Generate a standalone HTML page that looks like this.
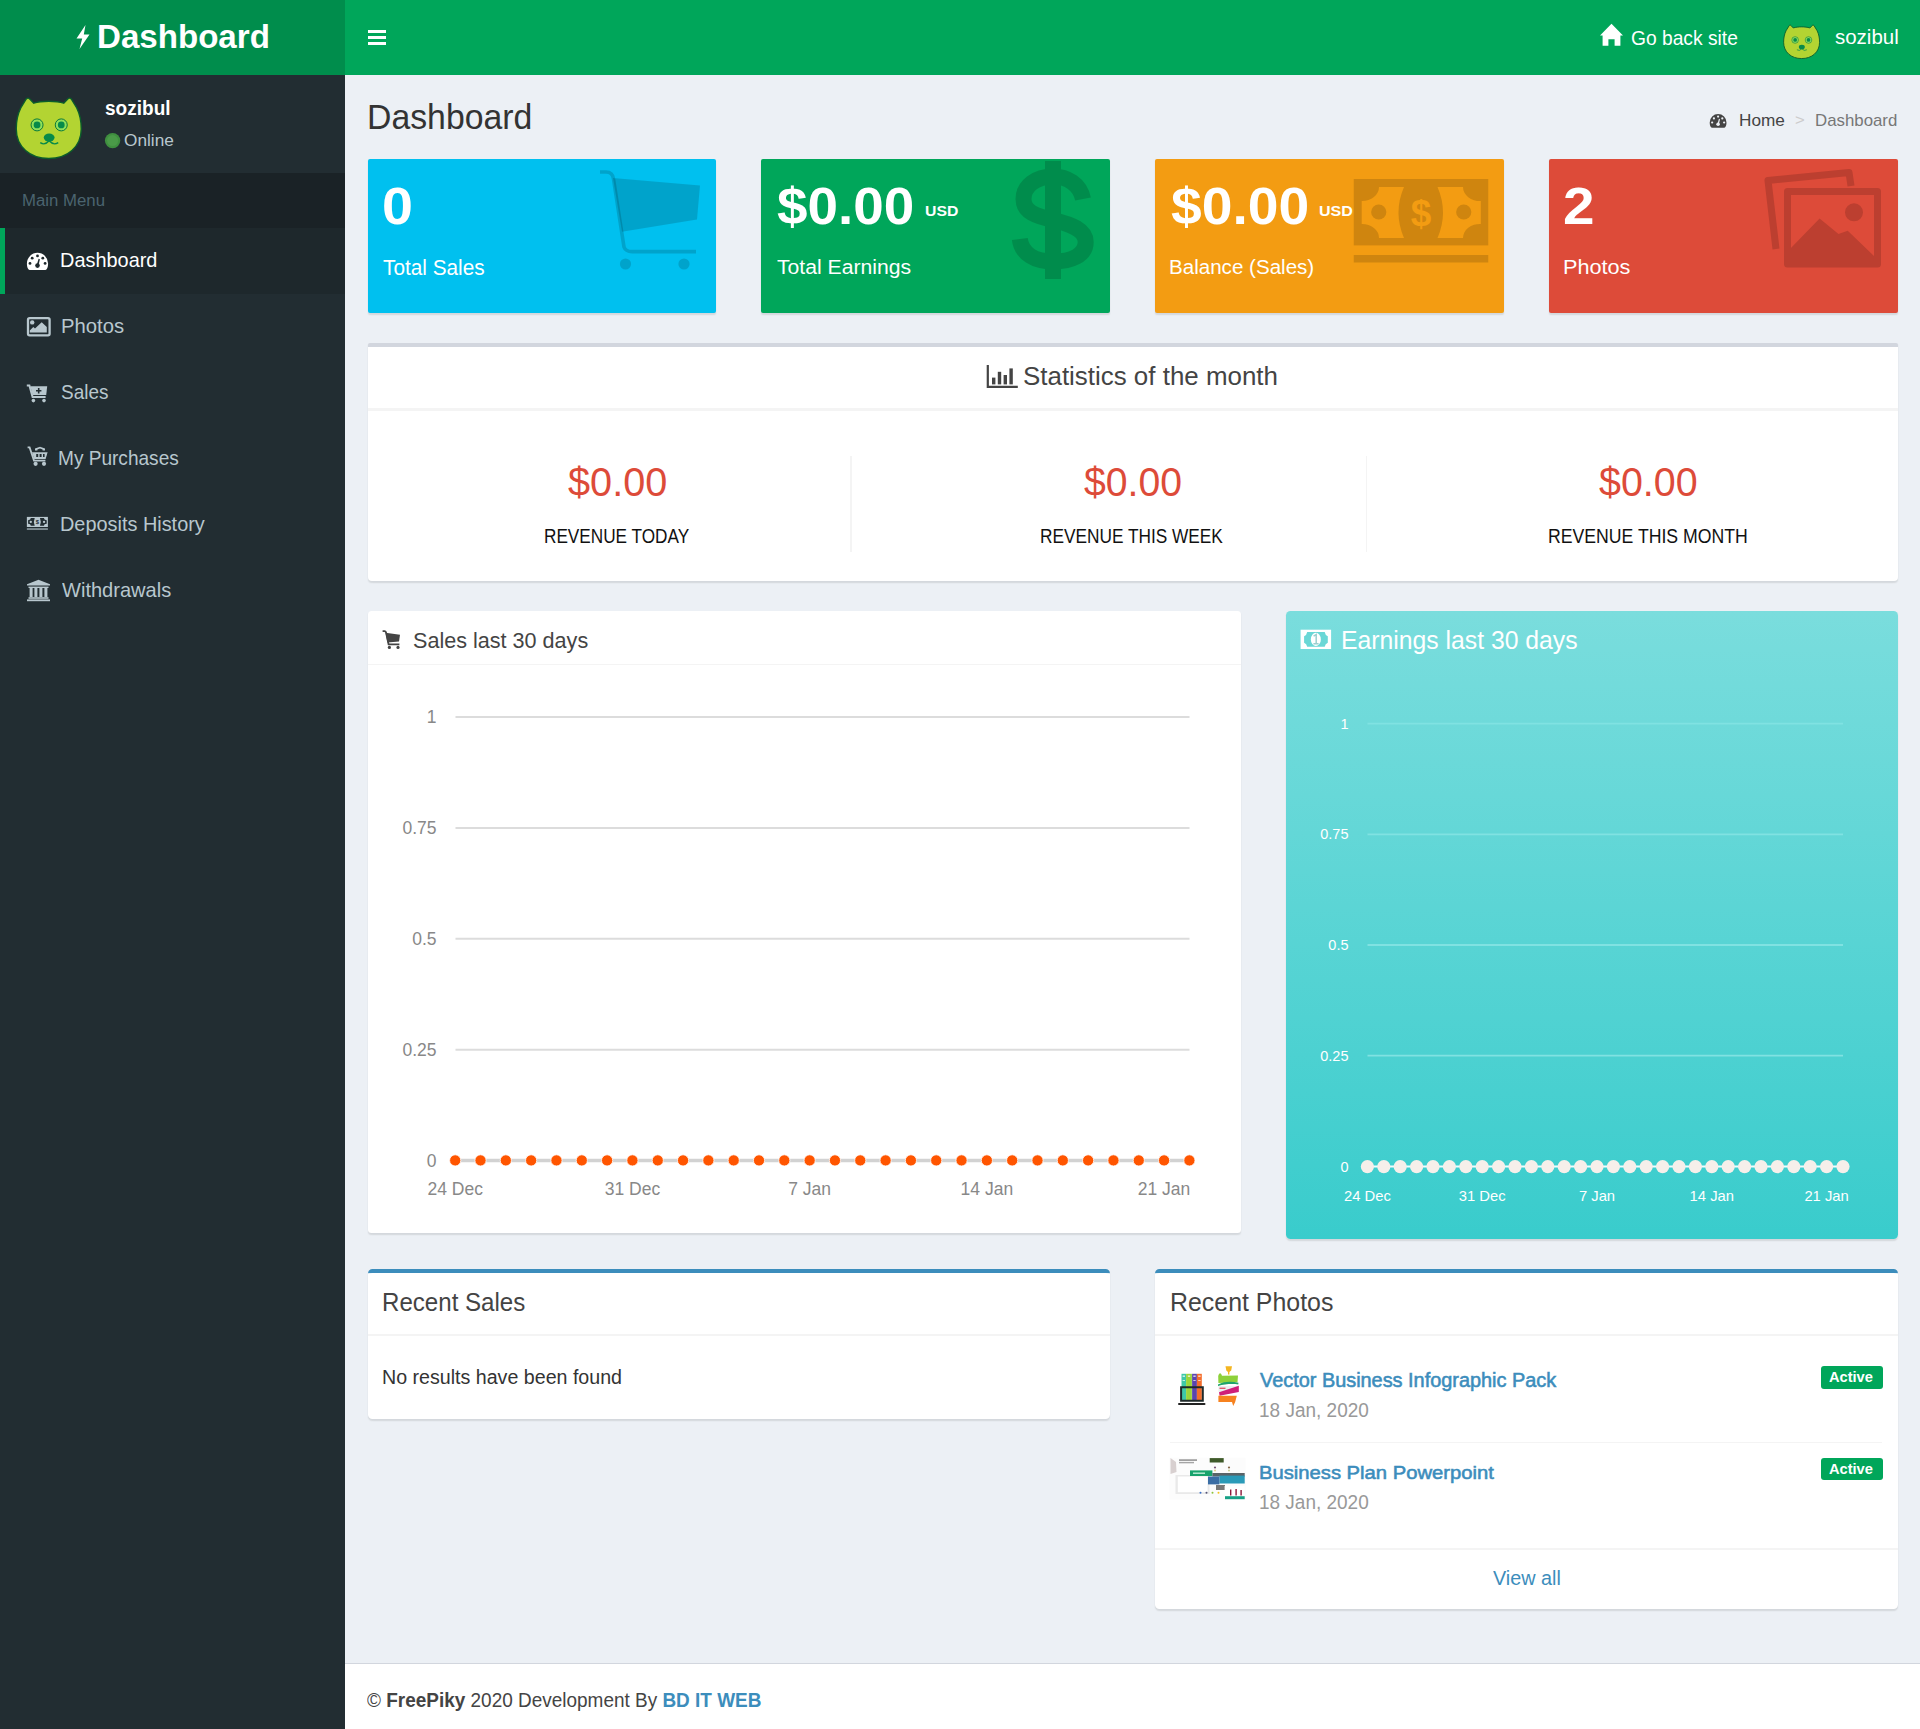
<!DOCTYPE html>
<html><head><meta charset="utf-8"><title>Dashboard</title>
<style>
html,body{margin:0;padding:0;width:1920px;height:1729px;overflow:hidden;background:#ecf0f5;}
body{position:relative;font-family:"Liberation Sans",sans-serif;}
.r{position:absolute;}
.t{position:absolute;line-height:1;white-space:nowrap;}
svg{display:block;overflow:visible;}
</style></head><body>
<div class="r" style="left:0px;top:0px;width:1920px;height:1729px;background:#ecf0f5;"></div>
<div class="r" style="left:0px;top:75px;width:345px;height:1654px;background:#222d32;"></div>
<div class="r" style="left:0px;top:0px;width:345px;height:75px;background:#008d4c;"></div>
<div class="r" style="left:345px;top:0px;width:1575px;height:75px;background:#00a65a;"></div>
<svg class="r" style="left:74px;top:24px" width="18" height="26" viewBox="0 0 18 26"><path d="M11.5 1 L2.5 14.5 H8.2 L5.5 25 L15.5 10.5 H9.8 Z" fill="#fff"/></svg>
<div class="t" style="left:97.35px;top:19.78px;font-size:33.33px;color:#fff;font-weight:700;transform:scaleX(0.9931);transform-origin:0 0;">Dashboard</div>
<div class="r" style="left:367.5px;top:30px;width:18.5px;height:3px;background:#fff;"></div>
<div class="r" style="left:367.5px;top:36px;width:18.5px;height:3px;background:#fff;"></div>
<div class="r" style="left:367.5px;top:42px;width:18.5px;height:3px;background:#fff;"></div>
<svg class="r" style="left:1599px;top:23px" width="25" height="24" viewBox="0 0 25 24"><path d="M12.5 0.8 L24 12.4 H21.4 V22.8 H15.6 V16.2 H9.4 V22.8 H3.6 V12.4 H1 Z" fill="#fff"/></svg>
<div class="t" style="left:1631.04px;top:27.55px;font-size:20.14px;color:#fff;font-weight:400;transform:scaleX(0.9550);transform-origin:0 0;">Go back site</div>
<svg class="r" style="left:1782.5px;top:23.5px" width="37.2" height="35.4" viewBox="-1 -1 67 64">
<path d="M32.5 61.5 C14 61.5 0 50 0 32 C0 24 1.5 17 4.5 11 L10 2 C11 0.8 12.5 0.8 13.5 2 L17.5 6.2 C22 4.6 27 4.2 32.5 4.2 C38 4.2 43 4.6 47.5 6.2 L51.5 2 C52.5 0.8 54 0.8 55 2 L60.5 11 C63.5 17 65 24 65 32 C65 50 51 61.5 32.5 61.5 Z" fill="#b3d432" stroke="#0b5d2b" stroke-width="1.6"/>
<circle cx="20.8" cy="27.9" r="6" fill="#8fe05a" stroke="#0b7a3a" stroke-width="1"/><circle cx="20.8" cy="27.9" r="3.4" fill="#078a49"/>
<circle cx="45" cy="27.9" r="6" fill="#8fe05a" stroke="#0b7a3a" stroke-width="1"/><circle cx="45" cy="27.9" r="3.4" fill="#078a49"/>
<ellipse cx="32.9" cy="40.6" rx="5.4" ry="4.2" fill="#078a49"/>
<path d="M24 45.6 Q28.5 48.8 32.9 43.8 Q37.3 48.8 42 45.6" fill="none" stroke="#078a49" stroke-width="1.3"/>
</svg>
<div class="t" style="left:1834.99px;top:27.40px;font-size:20.55px;color:#fff;font-weight:400;transform:scaleX(0.9957);transform-origin:0 0;">sozibul</div>
<svg class="r" style="left:15px;top:96px" width="67.5" height="64" viewBox="-1 -1 67 64">
<path d="M32.5 61.5 C14 61.5 0 50 0 32 C0 24 1.5 17 4.5 11 L10 2 C11 0.8 12.5 0.8 13.5 2 L17.5 6.2 C22 4.6 27 4.2 32.5 4.2 C38 4.2 43 4.6 47.5 6.2 L51.5 2 C52.5 0.8 54 0.8 55 2 L60.5 11 C63.5 17 65 24 65 32 C65 50 51 61.5 32.5 61.5 Z" fill="#b3d432" stroke="#0b5d2b" stroke-width="1.4"/>
<circle cx="20.8" cy="27.9" r="6" fill="#8fe05a" stroke="#0b7a3a" stroke-width="1"/><circle cx="20.8" cy="27.9" r="3.4" fill="#078a49"/>
<circle cx="45" cy="27.9" r="6" fill="#8fe05a" stroke="#0b7a3a" stroke-width="1"/><circle cx="45" cy="27.9" r="3.4" fill="#078a49"/>
<ellipse cx="32.9" cy="40.6" rx="5.4" ry="4.2" fill="#078a49"/>
<path d="M24 45.6 Q28.5 48.8 32.9 43.8 Q37.3 48.8 42 45.6" fill="none" stroke="#078a49" stroke-width="1.3"/>
</svg>
<div class="t" style="left:104.73px;top:98.29px;font-size:20.69px;color:#fff;font-weight:700;transform:scaleX(0.9204);transform-origin:0 0;">sozibul</div>
<svg class="r" style="left:104px;top:132px" width="17" height="17" viewBox="0 0 17 17"><circle cx="8.6" cy="8.6" r="7.7" fill="#3f8f3f"/><circle cx="8.6" cy="8.6" r="5.5" fill="#4a9a48"/></svg>
<div class="t" style="left:123.82px;top:132.55px;font-size:16.71px;color:#b8c7ce;font-weight:400;transform:scaleX(1.0321);transform-origin:0 0;">Online</div>
<div class="r" style="left:0px;top:172.5px;width:345px;height:55.5px;background:#1a2226;"></div>
<div class="t" style="left:22.16px;top:192.30px;font-size:17.25px;color:#4b646f;font-weight:400;transform:scaleX(0.9724);transform-origin:0 0;">Main Menu</div>
<div class="r" style="left:0px;top:228px;width:345px;height:66px;background:#1e282c;"></div>
<div class="r" style="left:0px;top:228px;width:4.5px;height:66px;background:#00a65a;"></div>
<div class="t" style="left:60.41px;top:250.63px;font-size:19.93px;color:#fff;font-weight:400;transform:scaleX(0.9994);transform-origin:0 0;">Dashboard</div>
<div class="t" style="left:60.88px;top:316.88px;font-size:19.93px;color:#b8c7ce;font-weight:400;transform:scaleX(1.0170);transform-origin:0 0;">Photos</div>
<div class="t" style="left:61.15px;top:382.43px;font-size:20.29px;color:#b8c7ce;font-weight:400;transform:scaleX(0.9350);transform-origin:0 0;">Sales</div>
<div class="t" style="left:57.87px;top:448.73px;font-size:19.93px;color:#b8c7ce;font-weight:400;transform:scaleX(0.9568);transform-origin:0 0;">My Purchases</div>
<div class="t" style="left:60.41px;top:514.73px;font-size:19.93px;color:#b8c7ce;font-weight:400;transform:scaleX(0.9981);transform-origin:0 0;">Deposits History</div>
<div class="t" style="left:61.90px;top:580.73px;font-size:19.93px;color:#b8c7ce;font-weight:400;transform:scaleX(1.0064);transform-origin:0 0;">Withdrawals</div>
<svg class="r" style="left:26px;top:252px" width="24" height="19" viewBox="0 0 24 19">
<path d="M11.5 0.8 A10.6 10.6 0 0 1 22.1 11.4 C22.1 14 21.5 16 20.6 17.2 C20.3 17.7 19.8 18 19.2 18 H3.8 C3.2 18 2.7 17.7 2.4 17.2 C1.5 16 0.9 14 0.9 11.4 A10.6 10.6 0 0 1 11.5 0.8 Z" fill="#fff"/>
<g fill="#1e282c"><circle cx="11.5" cy="3.9" r="1.4"/><circle cx="6.2" cy="6.2" r="1.4"/><circle cx="16.8" cy="6.2" r="1.4"/><circle cx="4" cy="11.4" r="1.4"/><circle cx="19.1" cy="11.4" r="1.4"/>
<circle cx="11.5" cy="13.6" r="2.3"/><path d="M10.6 13.4 L12.6 6.8 L13.9 7.2 L12.4 13.8 Z"/></g></svg>
<svg class="r" style="left:26px;top:316px" width="25" height="21" viewBox="0 0 25 21">
<rect x="2" y="2.2" width="21.6" height="17.2" rx="1.6" fill="none" stroke="#b8c7ce" stroke-width="2.3"/>
<circle cx="6.2" cy="6.4" r="2.2" fill="#b8c7ce"/>
<path d="M3.8 16.6 L3.8 14.6 L7.3 11 L9 12.6 L15.7 6.2 L20.8 11 L20.8 16.6 Z" fill="#b8c7ce"/></svg>
<svg class="r" style="left:26px;top:384px" width="22" height="19" viewBox="0 0 22 19">
<path d="M0.8 1.4 H3.4 L6.6 13 H19.6" fill="none" stroke="#b8c7ce" stroke-width="2"/>
<path d="M4.4 2.2 H21.2 L20.2 11 H6.6 Z" fill="#b8c7ce"/>
<path d="M12.7 4 V9.4 M10 6.7 H15.4" stroke="#222d32" stroke-width="1.6"/>
<circle cx="7.4" cy="16.6" r="1.8" fill="#b8c7ce"/><circle cx="18" cy="16.6" r="1.8" fill="#b8c7ce"/></svg>
<svg class="r" style="left:27px;top:446px" width="22" height="21" viewBox="0 0 22 21">
<path d="M0.6 1.4 H2.6 L7 14.6 H18.4" fill="none" stroke="#b8c7ce" stroke-width="1.8"/>
<path d="M5 6.2 H20.6 L18.6 13 H7.2 Z" fill="#b8c7ce"/>
<path d="M8 2.6 L13 0.8 L18 2.6 V4.6 H15.6 V3.4 L13 2.5 L10.4 3.4 V4.6 H8 Z" fill="#b8c7ce"/>
<g fill="#222d32"><rect x="9.2" y="8" width="2" height="3"/><rect x="12.6" y="8" width="2" height="3"/><rect x="16" y="8" width="1.6" height="3"/></g>
<circle cx="8.6" cy="17.8" r="2.1" fill="#b8c7ce"/><circle cx="17" cy="17.8" r="2.1" fill="#b8c7ce"/></svg>
<svg class="r" style="left:0;top:0" width="60" height="560" viewBox="0 0 60 560"><g transform="translate(26.86 516.9) scale(0.15637 0.1521) translate(-1353.75 -179)">
<rect x="1353.75" y="179" width="134.5" height="66.4" fill="#b8c7ce"/>
<path d="M1379 187 H1404 Q1393 212.5 1404 238 H1379 A17 14 0 0 0 1361.7 224 V201 A17 14 0 0 0 1379 187 Z" fill="#222d32"/>
<path d="M1463 187 H1437.5 Q1448.5 212.5 1437.5 238 H1463 A17 14 0 0 1 1480.8 224 V201 A17 14 0 0 1 1463 187 Z" fill="#222d32"/>
<circle cx="1378.75" cy="212" r="7.6" fill="#b8c7ce"/><circle cx="1463.75" cy="212" r="7.6" fill="#b8c7ce"/>
<rect x="1353.75" y="255" width="134.5" height="7.5" fill="#b8c7ce"/><text x="1421" y="226" font-size="37" font-weight="700" text-anchor="middle" fill="#222d32" font-family="Liberation Sans">$</text></g></svg>
<svg class="r" style="left:26px;top:579px" width="25" height="23" viewBox="0 0 25 23">
<path d="M12.5 0.8 L24 5.2 V6.6 H1 V5.2 Z" fill="#b8c7ce"/>
<rect x="2.5" y="7.6" width="20" height="1.4" fill="#b8c7ce"/>
<rect x="3.6" y="9" width="3" height="9" fill="#b8c7ce"/><rect x="8.4" y="9" width="3" height="9" fill="#b8c7ce"/>
<rect x="13.4" y="9" width="3" height="9" fill="#b8c7ce"/><rect x="18.4" y="9" width="3" height="9" fill="#b8c7ce"/>
<rect x="2.5" y="18.2" width="20" height="1.6" fill="#b8c7ce"/><rect x="1" y="20.4" width="23" height="1.8" fill="#b8c7ce"/></svg>
<div class="t" style="left:367.20px;top:100.16px;font-size:34.78px;color:#333;font-weight:400;transform:scaleX(0.9719);transform-origin:0 0;">Dashboard</div>
<svg class="r" style="left:1709px;top:113px" width="19" height="16" viewBox="0 0 24 19">
<path d="M11.5 0.8 A10.6 10.6 0 0 1 22.1 11.4 C22.1 14 21.5 16 20.6 17.2 C20.3 17.7 19.8 18 19.2 18 H3.8 C3.2 18 2.7 17.7 2.4 17.2 C1.5 16 0.9 14 0.9 11.4 A10.6 10.6 0 0 1 11.5 0.8 Z" fill="#444"/>
<g fill="#ecf0f5"><circle cx="11.5" cy="3.9" r="1.4"/><circle cx="6.2" cy="6.2" r="1.4"/><circle cx="16.8" cy="6.2" r="1.4"/><circle cx="4" cy="11.4" r="1.4"/><circle cx="19.1" cy="11.4" r="1.4"/>
<circle cx="11.5" cy="13.6" r="2.3"/><path d="M10.6 13.4 L12.6 6.8 L13.9 7.2 L12.4 13.8 Z"/></g></svg>
<div class="t" style="left:1738.62px;top:112.08px;font-size:17.39px;color:#444;font-weight:400;transform:scaleX(0.9893);transform-origin:0 0;">Home</div>
<div class="t" style="left:1794.5px;top:113.33px;font-size:14.5px;color:#ccc;font-weight:400;transform:scaleX(1.15);transform-origin:0 0;">&gt;</div>
<div class="t" style="left:1815.15px;top:112.08px;font-size:17.39px;color:#777;font-weight:400;transform:scaleX(0.9682);transform-origin:0 0;">Dashboard</div>
<div class="r" style="left:368px;top:159px;width:348px;height:153.5px;background:#00c0ef;border-radius:2px;box-shadow:0 1.5px 1.5px rgba(0,0,0,0.1);"></div>
<div class="r" style="left:761px;top:159px;width:349px;height:153.5px;background:#00a65a;border-radius:2px;box-shadow:0 1.5px 1.5px rgba(0,0,0,0.1);"></div>
<div class="r" style="left:1155px;top:159px;width:349px;height:153.5px;background:#f39c12;border-radius:2px;box-shadow:0 1.5px 1.5px rgba(0,0,0,0.1);"></div>
<div class="r" style="left:1549px;top:159px;width:349px;height:153.5px;background:#dd4b39;border-radius:2px;box-shadow:0 1.5px 1.5px rgba(0,0,0,0.1);"></div>
<svg class="r" style="left:580px;top:159px" width="136" height="131" viewBox="580 159 136 131">
<path d="M600 172 H606 C611 172 613 175 613.5 179 L624 247 C625 250 627 251.6 632 251.6 H696" fill="none" stroke="rgba(0,0,0,0.15)" stroke-width="3.6"/>
<path d="M613 178 L700 185.5 L697 219.6 L622 231.7 Z" fill="rgba(0,0,0,0.15)"/>
<circle cx="625.5" cy="264" r="5.6" fill="rgba(0,0,0,0.15)"/><circle cx="684" cy="264" r="5.6" fill="rgba(0,0,0,0.15)"/></svg>
<svg class="r" style="left:990px;top:159px" width="120" height="131" viewBox="990 159 120 131">
<g opacity="0.15"><path d="M1083 199 C1080 184 1067 176.5 1053 176.5 C1036 176.5 1023.5 186 1023.5 199 C1023.5 212 1036 216 1053 220 C1072 224.5 1085.7 230 1085.7 242 C1085.7 255 1072 261.5 1053 261.5 C1035 261.5 1021.5 254 1019.8 239" fill="none" stroke="#000" stroke-width="16"/>
<rect x="1045" y="161" width="16" height="118" fill="#000"/></g></svg>
<svg class="r" style="left:1340px;top:170px" width="160" height="100" viewBox="1340 170 160 100"><g transform="">
<rect x="1353.75" y="179" width="134.5" height="66.4" fill="#cf850f"/>
<path d="M1379 187 H1404 Q1393 212.5 1404 238 H1379 A17 14 0 0 0 1361.7 224 V201 A17 14 0 0 0 1379 187 Z" fill="#f39c12"/>
<path d="M1463 187 H1437.5 Q1448.5 212.5 1437.5 238 H1463 A17 14 0 0 1 1480.8 224 V201 A17 14 0 0 1 1463 187 Z" fill="#f39c12"/>
<circle cx="1378.75" cy="212" r="7.6" fill="#cf850f"/><circle cx="1463.75" cy="212" r="7.6" fill="#cf850f"/>
<rect x="1353.75" y="255" width="134.5" height="7.5" fill="#cf850f"/><text x="1421" y="226" font-size="37" font-weight="700" text-anchor="middle" fill="#f39c12" font-family="Liberation Sans">$</text></g></svg>
<svg class="r" style="left:1750px;top:160px" width="148" height="120" viewBox="1750 160 148 120">
<path d="M1776 249 L1768 180.5 L1849 172.5 L1851 186" fill="none" stroke="#bc3f30" stroke-width="7" stroke-linejoin="round"/>
<rect x="1787.5" y="191.5" width="90" height="72.5" fill="none" stroke="#bc3f30" stroke-width="7" stroke-linejoin="round"/>
<circle cx="1854" cy="212.3" r="9" fill="#bc3f30"/>
<path d="M1790 249 L1819.6 218.5 L1838.5 234 L1847.7 230.8 L1874 256 V262 H1790 Z" fill="#bc3f30"/></svg>
<div class="t" style="left:381.98px;top:180.18px;font-size:52.71px;color:#fff;font-weight:700;transform:scaleX(1.0543);transform-origin:0 0;">0</div>
<div class="t" style="left:382.78px;top:256.62px;font-size:21.59px;color:#fff;font-weight:400;transform:scaleX(0.9626);transform-origin:0 0;">Total Sales</div>
<div class="t" style="left:777.18px;top:180.30px;font-size:52.57px;color:#fff;font-weight:700;transform:scaleX(1.0425);transform-origin:0 0;">$0.00</div>
<div class="t" style="left:925.45px;top:202.62px;font-size:15.22px;color:#fff;font-weight:700;transform:scaleX(1.0364);transform-origin:0 0;">USD</div>
<div class="t" style="left:776.58px;top:257.06px;font-size:20.72px;color:#fff;font-weight:400;transform:scaleX(1.0219);transform-origin:0 0;">Total Earnings</div>
<div class="t" style="left:1170.87px;top:180.30px;font-size:52.57px;color:#fff;font-weight:700;transform:scaleX(1.0503);transform-origin:0 0;">$0.00</div>
<div class="t" style="left:1319.04px;top:202.62px;font-size:15.22px;color:#fff;font-weight:700;transform:scaleX(1.0527);transform-origin:0 0;">USD</div>
<div class="t" style="left:1168.85px;top:257.06px;font-size:20.72px;color:#fff;font-weight:400;transform:scaleX(0.9929);transform-origin:0 0;">Balance (Sales)</div>
<div class="t" style="left:1562.82px;top:180.18px;font-size:52.71px;color:#fff;font-weight:700;transform:scaleX(1.0750);transform-origin:0 0;">2</div>
<div class="t" style="left:1563.07px;top:257.06px;font-size:20.72px;color:#fff;font-weight:400;transform:scaleX(1.0455);transform-origin:0 0;">Photos</div>
<div class="r" style="left:368px;top:343px;width:1530px;height:238px;background:#fff;border-top:4.5px solid #d2d6de;border-radius:2px 2px 4px 4px;box-shadow:0 1.5px 1.5px rgba(0,0,0,0.1);box-sizing:border-box;"></div>
<div class="r" style="left:368px;top:408px;width:1530px;height:3px;background:#f4f4f4;"></div>
<svg class="r" style="left:986px;top:364px" width="33" height="25" viewBox="0 0 33 25">
<path d="M1.8 1 V22.8 H31.8" fill="none" stroke="#444" stroke-width="2.2"/>
<rect x="6" y="13.6" width="3.4" height="6.8" fill="#444"/><rect x="11.8" y="7.8" width="3.4" height="12.6" fill="#444"/>
<rect x="17.6" y="11" width="3.4" height="9.4" fill="#444"/><rect x="23.4" y="4.4" width="3.4" height="16" fill="#444"/></svg>
<div class="t" style="left:1023.43px;top:363.73px;font-size:25.71px;color:#444;font-weight:400;transform:scaleX(1.0081);transform-origin:0 0;">Statistics of the month</div>
<div class="t" style="left:568.20px;top:462.01px;font-size:40.86px;color:#dd4b39;font-weight:400;transform:scaleX(0.9710);transform-origin:0 0;">$0.00</div>
<div class="t" style="left:544.23px;top:526.07px;font-size:20.00px;color:#111;font-weight:400;transform:scaleX(0.8592);transform-origin:0 0;">REVENUE TODAY</div>
<div class="t" style="left:1083.81px;top:462.01px;font-size:40.86px;color:#dd4b39;font-weight:400;transform:scaleX(0.9591);transform-origin:0 0;">$0.00</div>
<div class="t" style="left:1040.42px;top:526.07px;font-size:20.00px;color:#111;font-weight:400;transform:scaleX(0.8629);transform-origin:0 0;">REVENUE THIS WEEK</div>
<div class="t" style="left:1599.21px;top:462.01px;font-size:40.86px;color:#dd4b39;font-weight:400;transform:scaleX(0.9651);transform-origin:0 0;">$0.00</div>
<div class="t" style="left:1547.99px;top:526.07px;font-size:20.00px;color:#111;font-weight:400;transform:scaleX(0.8826);transform-origin:0 0;">REVENUE THIS MONTH</div>
<div class="r" style="left:850px;top:456px;width:1.5px;height:96px;background:#f4f4f4;"></div>
<div class="r" style="left:1365.5px;top:456px;width:1.5px;height:96px;background:#f4f4f4;"></div>
<div class="r" style="left:368px;top:611px;width:873px;height:622px;background:#fff;border-radius:3.5px;box-shadow:0 1.5px 1.5px rgba(0,0,0,0.1);"></div>
<div class="r" style="left:368px;top:663.5px;width:873px;height:1.5px;background:#f4f4f4;"></div>
<svg class="r" style="left:382px;top:630px" width="19" height="20" viewBox="0 0 19 20">
<path d="M0.6 1.2 H2.6 C3.4 1.2 3.8 1.8 4 2.4 L6.6 14.4 H17.4" fill="none" stroke="#444" stroke-width="1.8"/>
<path d="M3.6 2.8 L18 4.8 L17 11.6 L5.4 12.4 Z" fill="#444"/>
<circle cx="7.4" cy="17.4" r="1.6" fill="#444"/><circle cx="16" cy="17.4" r="1.6" fill="#444"/></svg>
<div class="t" style="left:412.93px;top:630.04px;font-size:21.57px;color:#444;font-weight:400;transform:scaleX(1.0010);transform-origin:0 0;">Sales last 30 days</div>
<svg class="r" style="left:368px;top:665px" width="873" height="568" viewBox="368 665 873 568"><line x1="455.5" y1="717.1" x2="1189.5" y2="717.1" stroke="#dcdcdc" stroke-width="2"/><line x1="455.5" y1="828" x2="1189.5" y2="828" stroke="#dcdcdc" stroke-width="2"/><line x1="455.5" y1="938.8" x2="1189.5" y2="938.8" stroke="#dcdcdc" stroke-width="2"/><line x1="455.5" y1="1049.7" x2="1189.5" y2="1049.7" stroke="#dcdcdc" stroke-width="2"/><text x="436.5" y="723.1" font-size="17.5" text-anchor="end" fill="#888" font-family="Liberation Sans">1</text><text x="436.5" y="834.0" font-size="17.5" text-anchor="end" fill="#888" font-family="Liberation Sans">0.75</text><text x="436.5" y="944.8" font-size="17.5" text-anchor="end" fill="#888" font-family="Liberation Sans">0.5</text><text x="436.5" y="1055.7" font-size="17.5" text-anchor="end" fill="#888" font-family="Liberation Sans">0.25</text><text x="436.5" y="1166.5" font-size="17.5" text-anchor="end" fill="#888" font-family="Liberation Sans">0</text><line x1="455.5" y1="1160.5" x2="1189.5" y2="1160.5" stroke="#d2d2d2" stroke-width="3.5"/><circle cx="455.20" cy="1160.4" r="5.6" fill="#ff5500" stroke="#fff" stroke-width="0.8"/><circle cx="480.52" cy="1160.4" r="5.6" fill="#ff5500" stroke="#fff" stroke-width="0.8"/><circle cx="505.83" cy="1160.4" r="5.6" fill="#ff5500" stroke="#fff" stroke-width="0.8"/><circle cx="531.15" cy="1160.4" r="5.6" fill="#ff5500" stroke="#fff" stroke-width="0.8"/><circle cx="556.47" cy="1160.4" r="5.6" fill="#ff5500" stroke="#fff" stroke-width="0.8"/><circle cx="581.79" cy="1160.4" r="5.6" fill="#ff5500" stroke="#fff" stroke-width="0.8"/><circle cx="607.10" cy="1160.4" r="5.6" fill="#ff5500" stroke="#fff" stroke-width="0.8"/><circle cx="632.42" cy="1160.4" r="5.6" fill="#ff5500" stroke="#fff" stroke-width="0.8"/><circle cx="657.74" cy="1160.4" r="5.6" fill="#ff5500" stroke="#fff" stroke-width="0.8"/><circle cx="683.06" cy="1160.4" r="5.6" fill="#ff5500" stroke="#fff" stroke-width="0.8"/><circle cx="708.37" cy="1160.4" r="5.6" fill="#ff5500" stroke="#fff" stroke-width="0.8"/><circle cx="733.69" cy="1160.4" r="5.6" fill="#ff5500" stroke="#fff" stroke-width="0.8"/><circle cx="759.01" cy="1160.4" r="5.6" fill="#ff5500" stroke="#fff" stroke-width="0.8"/><circle cx="784.32" cy="1160.4" r="5.6" fill="#ff5500" stroke="#fff" stroke-width="0.8"/><circle cx="809.64" cy="1160.4" r="5.6" fill="#ff5500" stroke="#fff" stroke-width="0.8"/><circle cx="834.96" cy="1160.4" r="5.6" fill="#ff5500" stroke="#fff" stroke-width="0.8"/><circle cx="860.28" cy="1160.4" r="5.6" fill="#ff5500" stroke="#fff" stroke-width="0.8"/><circle cx="885.59" cy="1160.4" r="5.6" fill="#ff5500" stroke="#fff" stroke-width="0.8"/><circle cx="910.91" cy="1160.4" r="5.6" fill="#ff5500" stroke="#fff" stroke-width="0.8"/><circle cx="936.23" cy="1160.4" r="5.6" fill="#ff5500" stroke="#fff" stroke-width="0.8"/><circle cx="961.54" cy="1160.4" r="5.6" fill="#ff5500" stroke="#fff" stroke-width="0.8"/><circle cx="986.86" cy="1160.4" r="5.6" fill="#ff5500" stroke="#fff" stroke-width="0.8"/><circle cx="1012.18" cy="1160.4" r="5.6" fill="#ff5500" stroke="#fff" stroke-width="0.8"/><circle cx="1037.50" cy="1160.4" r="5.6" fill="#ff5500" stroke="#fff" stroke-width="0.8"/><circle cx="1062.81" cy="1160.4" r="5.6" fill="#ff5500" stroke="#fff" stroke-width="0.8"/><circle cx="1088.13" cy="1160.4" r="5.6" fill="#ff5500" stroke="#fff" stroke-width="0.8"/><circle cx="1113.45" cy="1160.4" r="5.6" fill="#ff5500" stroke="#fff" stroke-width="0.8"/><circle cx="1138.77" cy="1160.4" r="5.6" fill="#ff5500" stroke="#fff" stroke-width="0.8"/><circle cx="1164.08" cy="1160.4" r="5.6" fill="#ff5500" stroke="#fff" stroke-width="0.8"/><circle cx="1189.40" cy="1160.4" r="5.6" fill="#ff5500" stroke="#fff" stroke-width="0.8"/><text x="455.20" y="1194.8" font-size="17.5" text-anchor="middle" fill="#888" font-family="Liberation Sans">24 Dec</text><text x="632.42" y="1194.8" font-size="17.5" text-anchor="middle" fill="#888" font-family="Liberation Sans">31 Dec</text><text x="809.64" y="1194.8" font-size="17.5" text-anchor="middle" fill="#888" font-family="Liberation Sans">7 Jan</text><text x="986.86" y="1194.8" font-size="17.5" text-anchor="middle" fill="#888" font-family="Liberation Sans">14 Jan</text><text x="1164.08" y="1194.8" font-size="17.5" text-anchor="middle" fill="#888" font-family="Liberation Sans">21 Jan</text></svg>
<div class="r" style="left:1286px;top:611px;width:612px;height:627.5px;background:linear-gradient(to top, #39cccc, #7adddd);border-radius:4.5px;box-shadow:0 1.5px 1.5px rgba(0,0,0,0.1);"></div>
<svg class="r" style="left:1290px;top:620px" width="50" height="40" viewBox="1290 620 50 40">
<rect x="1300.6" y="629.7" width="30.5" height="19.3" fill="#fff"/>
<path d="M1307.2 632.1 H1324.7 Q1325.2 635.4 1327.8 636.2 V642.7 Q1325.2 643.5 1324.7 646.8 H1307.2 Q1306.7 643.5 1304.1 642.7 V636.2 Q1306.7 635.4 1307.2 632.1 Z" fill="#6ad7d6"/>
<ellipse cx="1315.85" cy="639.4" rx="5" ry="6.6" fill="#fff"/>
<path d="M1313.6 636.2 L1316.2 634.6 V643.6 M1313.4 643.8 H1318.6" fill="none" stroke="#9ccfcf" stroke-width="1.5"/></svg>
<div class="t" style="left:1341.22px;top:626.92px;font-size:26.09px;color:#fff;font-weight:400;transform:scaleX(0.9489);transform-origin:0 0;">Earnings last 30 days</div>
<svg class="r" style="left:1286px;top:660px" width="612" height="578" viewBox="1286 660 612 578"><line x1="1367.5" y1="723.6" x2="1843" y2="723.6" stroke="#80e2e2" stroke-width="1.8"/><line x1="1367.5" y1="834.3" x2="1843" y2="834.3" stroke="#80e2e2" stroke-width="1.8"/><line x1="1367.5" y1="945" x2="1843" y2="945" stroke="#80e2e2" stroke-width="1.8"/><line x1="1367.5" y1="1055.7" x2="1843" y2="1055.7" stroke="#80e2e2" stroke-width="1.8"/><text x="1348.5" y="728.6" font-size="14.5" text-anchor="end" fill="#fff" font-family="Liberation Sans">1</text><text x="1348.5" y="839.3" font-size="14.5" text-anchor="end" fill="#fff" font-family="Liberation Sans">0.75</text><text x="1348.5" y="950.0" font-size="14.5" text-anchor="end" fill="#fff" font-family="Liberation Sans">0.5</text><text x="1348.5" y="1060.7" font-size="14.5" text-anchor="end" fill="#fff" font-family="Liberation Sans">0.25</text><text x="1348.5" y="1171.6" font-size="14.5" text-anchor="end" fill="#fff" font-family="Liberation Sans">0</text><line x1="1367.5" y1="1166.6" x2="1843" y2="1166.6" stroke="#eff" stroke-width="2"/><circle cx="1367.40" cy="1166.6" r="6.6" fill="#f6efea"/><circle cx="1383.80" cy="1166.6" r="6.6" fill="#f6efea"/><circle cx="1400.20" cy="1166.6" r="6.6" fill="#f6efea"/><circle cx="1416.60" cy="1166.6" r="6.6" fill="#f6efea"/><circle cx="1433.00" cy="1166.6" r="6.6" fill="#f6efea"/><circle cx="1449.40" cy="1166.6" r="6.6" fill="#f6efea"/><circle cx="1465.80" cy="1166.6" r="6.6" fill="#f6efea"/><circle cx="1482.20" cy="1166.6" r="6.6" fill="#f6efea"/><circle cx="1498.60" cy="1166.6" r="6.6" fill="#f6efea"/><circle cx="1515.00" cy="1166.6" r="6.6" fill="#f6efea"/><circle cx="1531.40" cy="1166.6" r="6.6" fill="#f6efea"/><circle cx="1547.80" cy="1166.6" r="6.6" fill="#f6efea"/><circle cx="1564.20" cy="1166.6" r="6.6" fill="#f6efea"/><circle cx="1580.60" cy="1166.6" r="6.6" fill="#f6efea"/><circle cx="1597.00" cy="1166.6" r="6.6" fill="#f6efea"/><circle cx="1613.40" cy="1166.6" r="6.6" fill="#f6efea"/><circle cx="1629.80" cy="1166.6" r="6.6" fill="#f6efea"/><circle cx="1646.20" cy="1166.6" r="6.6" fill="#f6efea"/><circle cx="1662.60" cy="1166.6" r="6.6" fill="#f6efea"/><circle cx="1679.00" cy="1166.6" r="6.6" fill="#f6efea"/><circle cx="1695.40" cy="1166.6" r="6.6" fill="#f6efea"/><circle cx="1711.80" cy="1166.6" r="6.6" fill="#f6efea"/><circle cx="1728.20" cy="1166.6" r="6.6" fill="#f6efea"/><circle cx="1744.60" cy="1166.6" r="6.6" fill="#f6efea"/><circle cx="1761.00" cy="1166.6" r="6.6" fill="#f6efea"/><circle cx="1777.40" cy="1166.6" r="6.6" fill="#f6efea"/><circle cx="1793.80" cy="1166.6" r="6.6" fill="#f6efea"/><circle cx="1810.20" cy="1166.6" r="6.6" fill="#f6efea"/><circle cx="1826.60" cy="1166.6" r="6.6" fill="#f6efea"/><circle cx="1843.00" cy="1166.6" r="6.6" fill="#f6efea"/><text x="1367.40" y="1200.8" font-size="14.8" text-anchor="middle" fill="#fff" font-family="Liberation Sans">24 Dec</text><text x="1482.20" y="1200.8" font-size="14.8" text-anchor="middle" fill="#fff" font-family="Liberation Sans">31 Dec</text><text x="1597.00" y="1200.8" font-size="14.8" text-anchor="middle" fill="#fff" font-family="Liberation Sans">7 Jan</text><text x="1711.80" y="1200.8" font-size="14.8" text-anchor="middle" fill="#fff" font-family="Liberation Sans">14 Jan</text><text x="1826.60" y="1200.8" font-size="14.8" text-anchor="middle" fill="#fff" font-family="Liberation Sans">21 Jan</text></svg>
<div class="r" style="left:368px;top:1269px;width:742px;height:149.5px;background:#fff;border-top:4.5px solid #3c8dbc;border-radius:4.5px;box-shadow:0 1.5px 1.5px rgba(0,0,0,0.1);box-sizing:border-box;"></div>
<div class="r" style="left:368px;top:1334px;width:742px;height:1.5px;background:#f4f4f4;"></div>
<div class="t" style="left:381.97px;top:1290.03px;font-size:25.36px;color:#444;font-weight:400;transform:scaleX(0.9501);transform-origin:0 0;">Recent Sales</div>
<div class="t" style="left:382.03px;top:1367.28px;font-size:20.58px;color:#333;font-weight:400;transform:scaleX(0.9537);transform-origin:0 0;">No results have been found</div>
<div class="r" style="left:1155px;top:1269px;width:743px;height:340px;background:#fff;border-top:4.5px solid #3c8dbc;border-radius:4.5px;box-shadow:0 1.5px 1.5px rgba(0,0,0,0.1);box-sizing:border-box;"></div>
<div class="r" style="left:1155px;top:1334px;width:743px;height:1.5px;background:#f4f4f4;"></div>
<div class="t" style="left:1169.71px;top:1290.11px;font-size:25.51px;color:#444;font-weight:400;transform:scaleX(0.9769);transform-origin:0 0;">Recent Photos</div>
<svg class="r" style="left:1166px;top:1360px" width="84" height="50" viewBox="1166 1360 84 50">
<rect x="1181.5" y="1373.8" width="4.6" height="26.5" fill="#3ec9a7"/><rect x="1186.1" y="1373.8" width="5.8" height="26.5" fill="#9bd53a"/>
<rect x="1192.1" y="1373.8" width="4.8" height="26.5" fill="#5a45ad"/><rect x="1196.9" y="1373.8" width="4.9" height="26.5" fill="#f46d2b"/>
<g fill="#fff" opacity="0.7"><rect x="1182.6" y="1375.4" width="2.4" height="1.6"/><rect x="1187.8" y="1375.4" width="2.4" height="1.6"/><rect x="1193.3" y="1375.4" width="2.4" height="1.6"/><rect x="1198.2" y="1375.4" width="2.4" height="1.6"/>
<rect x="1182.6" y="1380" width="2.4" height="1"/><rect x="1193.3" y="1380" width="2.4" height="1"/><rect x="1198.2" y="1380" width="2.4" height="1"/></g>
<path d="M1180.1 1386.2 H1203.8 V1401.7 H1180.1 Z M1182.1 1388.2 V1399.7 H1201.8 V1388.2 Z" fill="#1f2a2a" fill-rule="evenodd"/>
<rect x="1178" y="1402.9" width="27.5" height="2.2" rx="1" fill="#222"/>
<path d="M1225.5 1366.3 H1232 L1231.2 1370.5 L1229.4 1372 V1374.6 H1228 V1372 L1226.3 1370.5 Z" fill="#f4b520"/>
<path d="M1218.2 1376 C1219 1372.5 1221 1372 1222 1375.8 L1238 1375.6 L1237.5 1382.2 L1218.4 1383 Z" fill="#8dd13a"/>
<path d="M1218 1384.5 C1225 1381 1232 1381.5 1238.5 1382.8 L1238.2 1384.4 C1232 1383.6 1225 1384 1218 1386 Z" fill="#1ea46a"/>
<rect x="1218.5" y="1386" width="19" height="6" fill="#eceef0"/>
<rect x="1219.5" y="1387.6" width="6" height="1.4" fill="#e05a6a"/>
<path d="M1219 1392.2 L1238.8 1385.8 V1392 L1219.6 1395.8 Z" fill="#cf1e78"/>
<path d="M1218.4 1395.8 H1236.8 L1235.2 1402 L1233.2 1406 L1232 1402 H1218.4 Z" fill="#f7821f"/></svg>
<svg class="r" style="left:1166px;top:1452px" width="84" height="52" viewBox="1166 1452 84 52">
<rect x="1169.5" y="1457.6" width="76" height="42" fill="#fcfcfc"/>
<rect x="1175.5" y="1475" width="34" height="19" fill="#e4e4e4" opacity="0.8"/>
<rect x="1177.8" y="1476.5" width="29.8" height="15.7" fill="#fff"/>
<path d="M1170.5 1458 L1176 1462 L1176.5 1472 L1170.5 1474 Z" fill="#d8d0d0"/>
<rect x="1179" y="1459.3" width="18" height="1.6" fill="#6a6a6a" opacity="0.7"/><rect x="1179" y="1461.9" width="15" height="1.4" fill="#6a6a6a" opacity="0.6"/>
<rect x="1190" y="1470.4" width="22.4" height="5.6" fill="#17a36c"/>
<rect x="1193" y="1472.5" width="12" height="1.4" fill="#e8fff4" opacity="0.8"/>
<rect x="1209.7" y="1458.1" width="14" height="4.4" fill="#3f5a2a"/>
<circle cx="1215" cy="1467.5" r="1.1" fill="#7a5a7a"/><circle cx="1229" cy="1467.5" r="1.1" fill="#8a6a4a"/>
<circle cx="1215" cy="1470.6" r="1" fill="#e5d08a"/><circle cx="1229" cy="1470.6" r="1" fill="#c8d08a"/>
<rect x="1212.4" y="1473" width="32.3" height="3.5" fill="#5a6468"/>
<rect x="1219.4" y="1475.6" width="25.3" height="7.9" fill="#2a9ab8"/>
<rect x="1208" y="1476.5" width="11.4" height="7.9" fill="#3b6ea5"/>
<rect x="1216" y="1485" width="9" height="5" fill="#555" opacity="0.8"/>
<rect x="1224.6" y="1486" width="20.1" height="13.2" fill="#fff"/>
<rect x="1230" y="1489.5" width="1.4" height="6" fill="#8b1a3a"/><rect x="1235.4" y="1489" width="1.4" height="6.5" fill="#8b1a3a"/><rect x="1240.4" y="1490" width="1.4" height="5.5" fill="#8b1a3a"/>
<rect x="1225" y="1496.2" width="19.7" height="3" fill="#16a085"/>
<circle cx="1200.5" cy="1492.7" r="1" fill="#3a6fc8"/><circle cx="1206.5" cy="1492.7" r="1" fill="#557"/><circle cx="1212.5" cy="1492.7" r="1" fill="#8cc43c"/><circle cx="1218.5" cy="1492.7" r="1" fill="#f5c21b"/></svg>
<div class="t" style="left:1260.10px;top:1371.34px;font-size:19.57px;color:#3c8dbc;font-weight:400;transform:scaleX(1.0162);transform-origin:0 0;-webkit-text-stroke:0.55px #3c8dbc;">Vector Business Infographic Pack</div>
<div class="t" style="left:1258.78px;top:1401.14px;font-size:19.57px;color:#999;font-weight:400;transform:scaleX(0.9708);transform-origin:0 0;">18 Jan, 2020</div>
<div class="r" style="left:1821px;top:1366px;width:62px;height:22.5px;background:#00a65a;border-radius:3px;"></div>
<div class="t" style="left:1829.33px;top:1369.04px;font-size:15.07px;color:#fff;font-weight:700;transform:scaleX(0.9704);transform-origin:0 0;">Active</div>
<div class="r" style="left:1170px;top:1441.5px;width:712px;height:1.5px;background:#f4f4f4;"></div>
<div class="t" style="left:1258.88px;top:1463.60px;font-size:18.55px;color:#3c8dbc;font-weight:400;transform:scaleX(1.0905);transform-origin:0 0;-webkit-text-stroke:0.55px #3c8dbc;">Business Plan Powerpoint</div>
<div class="t" style="left:1258.78px;top:1493.12px;font-size:19.71px;color:#999;font-weight:400;transform:scaleX(0.9637);transform-origin:0 0;">18 Jan, 2020</div>
<div class="r" style="left:1821px;top:1458px;width:62px;height:21.700000000000045px;background:#00a65a;border-radius:3px;"></div>
<div class="t" style="left:1829.33px;top:1461.04px;font-size:15.07px;color:#fff;font-weight:700;transform:scaleX(0.9704);transform-origin:0 0;">Active</div>
<div class="r" style="left:1155px;top:1548px;width:743px;height:1.5px;background:#f4f4f4;"></div>
<div class="t" style="left:1492.90px;top:1568.99px;font-size:19.86px;color:#3c8dbc;font-weight:400;transform:scaleX(0.9968);transform-origin:0 0;">View all</div>
<div class="r" style="left:345px;top:1662.5px;width:1575px;height:66.5px;background:#fff;border-top:1.5px solid #d2d6de;box-sizing:border-box;"></div>
<div class="t" style="left:367.42px;top:1691.12px;font-size:19.71px;color:#444;font-weight:400;transform:scaleX(0.9631);transform-origin:0 0;">&copy; <b>FreePiky</b> 2020 Development By <b style="color:#3c8dbc">BD IT WEB</b></div>
</body></html>
